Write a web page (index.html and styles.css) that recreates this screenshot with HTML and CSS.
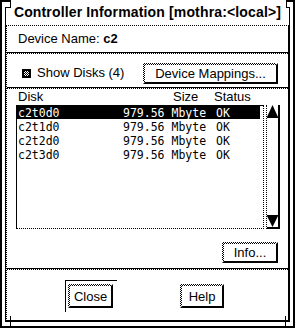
FILE: index.html
```html
<!DOCTYPE html>
<html>
<head>
<meta charset="utf-8">
<link rel="stylesheet" href="styles.css">
</head>
<body>
<div class="wm">
  <div class="corner tl"></div>
  <div class="corner tr"></div>
  <div class="tick bl"></div>
  <div class="tick br"></div>
  <div class="inner">
    <div class="title">Controller Information [mothra:&lt;local&gt;]</div>
    <div class="client">
      <div class="name">Device Name: <b>c2</b></div>
      <div class="sep"></div>
      <div class="show">
        <span class="check"><svg width="9" height="9" viewBox="0 0 9 9"><defs><pattern id="dith" width="2" height="2" patternUnits="userSpaceOnUse"><rect width="1" height="1" fill="#000"/><rect x="1" y="1" width="1" height="1" fill="#000"/><rect x="1" width="1" height="1" fill="#fff"/><rect y="1" width="1" height="1" fill="#fff"/></pattern></defs><rect width="9" height="9" fill="#000"/><rect x="2" y="2" width="5" height="5" fill="url(#dith)"/></svg></span>
        <span class="check-label">Show Disks (4)</span>
        <button class="btn btn-map">Device Mappings...</button>
      </div>
      <div class="sep"></div>
      <div class="list-pane">
        <div class="list-head"><span class="h-disk">Disk</span><span class="h-size">Size</span><span class="h-status">Status</span></div>
        <div class="list-wrap">
          <div class="list">
            <div class="row sel"><span class="c-disk">c2t0d0</span><span class="c-size">979.56 Mbyte</span><span class="c-status">OK</span></div>
            <div class="row"><span class="c-disk">c2t1d0</span><span class="c-size">979.56 Mbyte</span><span class="c-status">OK</span></div>
            <div class="row"><span class="c-disk">c2t2d0</span><span class="c-size">979.56 Mbyte</span><span class="c-status">OK</span></div>
            <div class="row"><span class="c-disk">c2t3d0</span><span class="c-size">979.56 Mbyte</span><span class="c-status">OK</span></div>
          </div>
          <div class="sb">
            <svg class="arrow" width="11" height="13" viewBox="0 0 11 13"><polygon points="5.5,0 11,12 0,12" fill="#000"/><rect y="12" width="11" height="1" fill="#000"/></svg>
            <div class="trough"></div>
            <svg class="arrow" width="11" height="14" viewBox="0 0 11 14"><rect y="0" width="11" height="1" fill="#000"/><polygon points="0,1 11,1 5.5,12" fill="#000"/><rect y="12" width="11" height="2" fill="#000"/></svg>
          </div>
        </div>
        <div class="info-row"><button class="btn btn-info">Info...</button></div>
      </div>
      <div class="sep"></div>
      <div class="actions">
        <div class="ring"><button class="btn btn-close">Close</button></div>
        <button class="btn btn-help">Help</button>
      </div>
    </div>
  </div>
</div>
</body>
</html>
```
FILE: styles.css
```css
* { box-sizing: border-box; }
html, body { margin: 0; padding: 0; background: #fff; }
body {
  font-family: "Liberation Sans", Arial, sans-serif;
  font-size: 13px;
  color: #000;
}
.wm {
  position: relative;
  width: 295px;
  height: 328px;
  border-left: 2px solid #000;
  border-right: 2px solid #000;
  border-bottom: 2px solid #000;
  padding: 0 3px 4px 3px;
  display: flex;
  flex-direction: column;
}
.corner { position: absolute; top: 0; background: #fff; }
.corner::after {
  content: "";
  position: absolute;
  bottom: 0;
  height: 1px;
  background: #000;
}
.tl {
  left: -2px;
  width: 11px;
  height: 8px;
  border-top: 2px solid #000;
  border-left: 2px solid #000;
  border-right: 1px solid #000;
}
.tl::after { left: 3px; right: 0; }
.tr {
  right: -2px;
  width: 9px;
  height: 8px;
  border-top: 2px solid #000;
  border-right: 2px solid #000;
  border-left: 1px solid #000;
}
.tr::after { left: 0; width: 3px; }
.tick {
  position: absolute;
  bottom: -2px;
  width: 1px;
  height: 12px;
  background: #000;
}
.bl { left: 8px; }
.br { right: 7px; }
.inner {
  flex: 1;
  border-left: 1px solid #000;
  border-right: 1px solid #000;
  border-bottom: 1px solid #000;
  display: flex;
  flex-direction: column;
}
.title {
  height: 25px;
  line-height: 25px;
  text-align: center;
  font-weight: bold;
  font-size: 14px;
  letter-spacing: 0.15px;
  white-space: nowrap;
}
.client {
  flex: 1;
  border-top: 1px dotted #000;
  border-left: 1px dotted #000;
  border-right: 1px solid #000;
  border-bottom: 1px solid #000;
  display: flex;
  flex-direction: column;
}
.name {
  height: 26px;
  line-height: 26px;
  padding-left: 11px;
}
.sep {
  height: 2px;
  border-top: 1px solid #000;
  border-bottom: 1px dotted #000;
}
.show {
  height: 33px;
  padding: 9px 10px 0 15px;
  display: flex;
  align-items: flex-start;
}
.check {
  height: 21px;
  display: flex;
  align-items: center;
}
.check svg { display: block; }
.check-label {
  margin-left: 6px;
  height: 21px;
  line-height: 20px;
}
.btn {
  font-family: "Liberation Sans", Arial, sans-serif;
  font-size: 13px;
  color: #000;
  padding: 0;
  margin: 0;
  border: 2px solid transparent;
  border-right-color: #000;
  border-bottom-color: #000;
  background:
    linear-gradient(#fff, #fff) padding-box,
    repeating-conic-gradient(#000 0 25%, #fff 0 50%) 0 0 / 2px 2px border-box;
  display: flex;
  align-items: center;
  justify-content: center;
  line-height: 1;
}
.btn-map { margin-left: auto; width: 135px; height: 21px; }
.list-pane {
  height: 179px;
  padding: 0 8px 0 9px;
  display: flex;
  flex-direction: column;
}
.list-head {
  height: 16px;
  line-height: 16px;
  padding-left: 2px;
  display: flex;
  white-space: nowrap;
}
.h-disk { width: 155px; }
.h-size { width: 41px; }
.list-wrap {
  height: 124px;
  display: flex;
}
.list {
  width: 248px;
  border-top: 1px solid #000;
  border-left: 1px solid #000;
  border-right: 1px dotted #000;
  border-bottom: 1px dotted #000;
  padding-right: 3px;
}
.row {
  display: flex;
  height: 14px;
  line-height: 14px;
  padding-left: 1px;
  font-family: "DejaVu Sans Mono", "Liberation Mono", monospace;
  font-size: 11.5px;
  white-space: nowrap;
}
.row.sel { background: #000; color: #fff; height: 13px; margin-bottom: 1px; }
.c-disk { width: 105px; }
.c-size { width: 93px; }
.sb {
  margin-left: 2px;
  width: 14px;
  display: flex;
  flex-direction: column;
  border-left: 1px dotted #000;
  border-right: 2px solid #000;
}
.arrow { display: block; flex: none; }
.trough { flex: 1; }
.info-row {
  margin-top: 13px;
  display: flex;
  justify-content: flex-end;
  padding-right: 2px;
}
.btn-info { width: 56px; height: 21px; }
.actions {
  flex: 1;
  padding: 10px 0 0 58px;
  display: flex;
  align-items: flex-start;
}
.ring {
  border-top: 1px solid #000;
  border-left: 1px solid #000;
  padding: 3px 4px 4px 2px;
}
.btn-close { width: 45px; height: 24px; }
.btn-help { width: 44px; height: 24px; margin: 4px 0 0 63px; }
```
